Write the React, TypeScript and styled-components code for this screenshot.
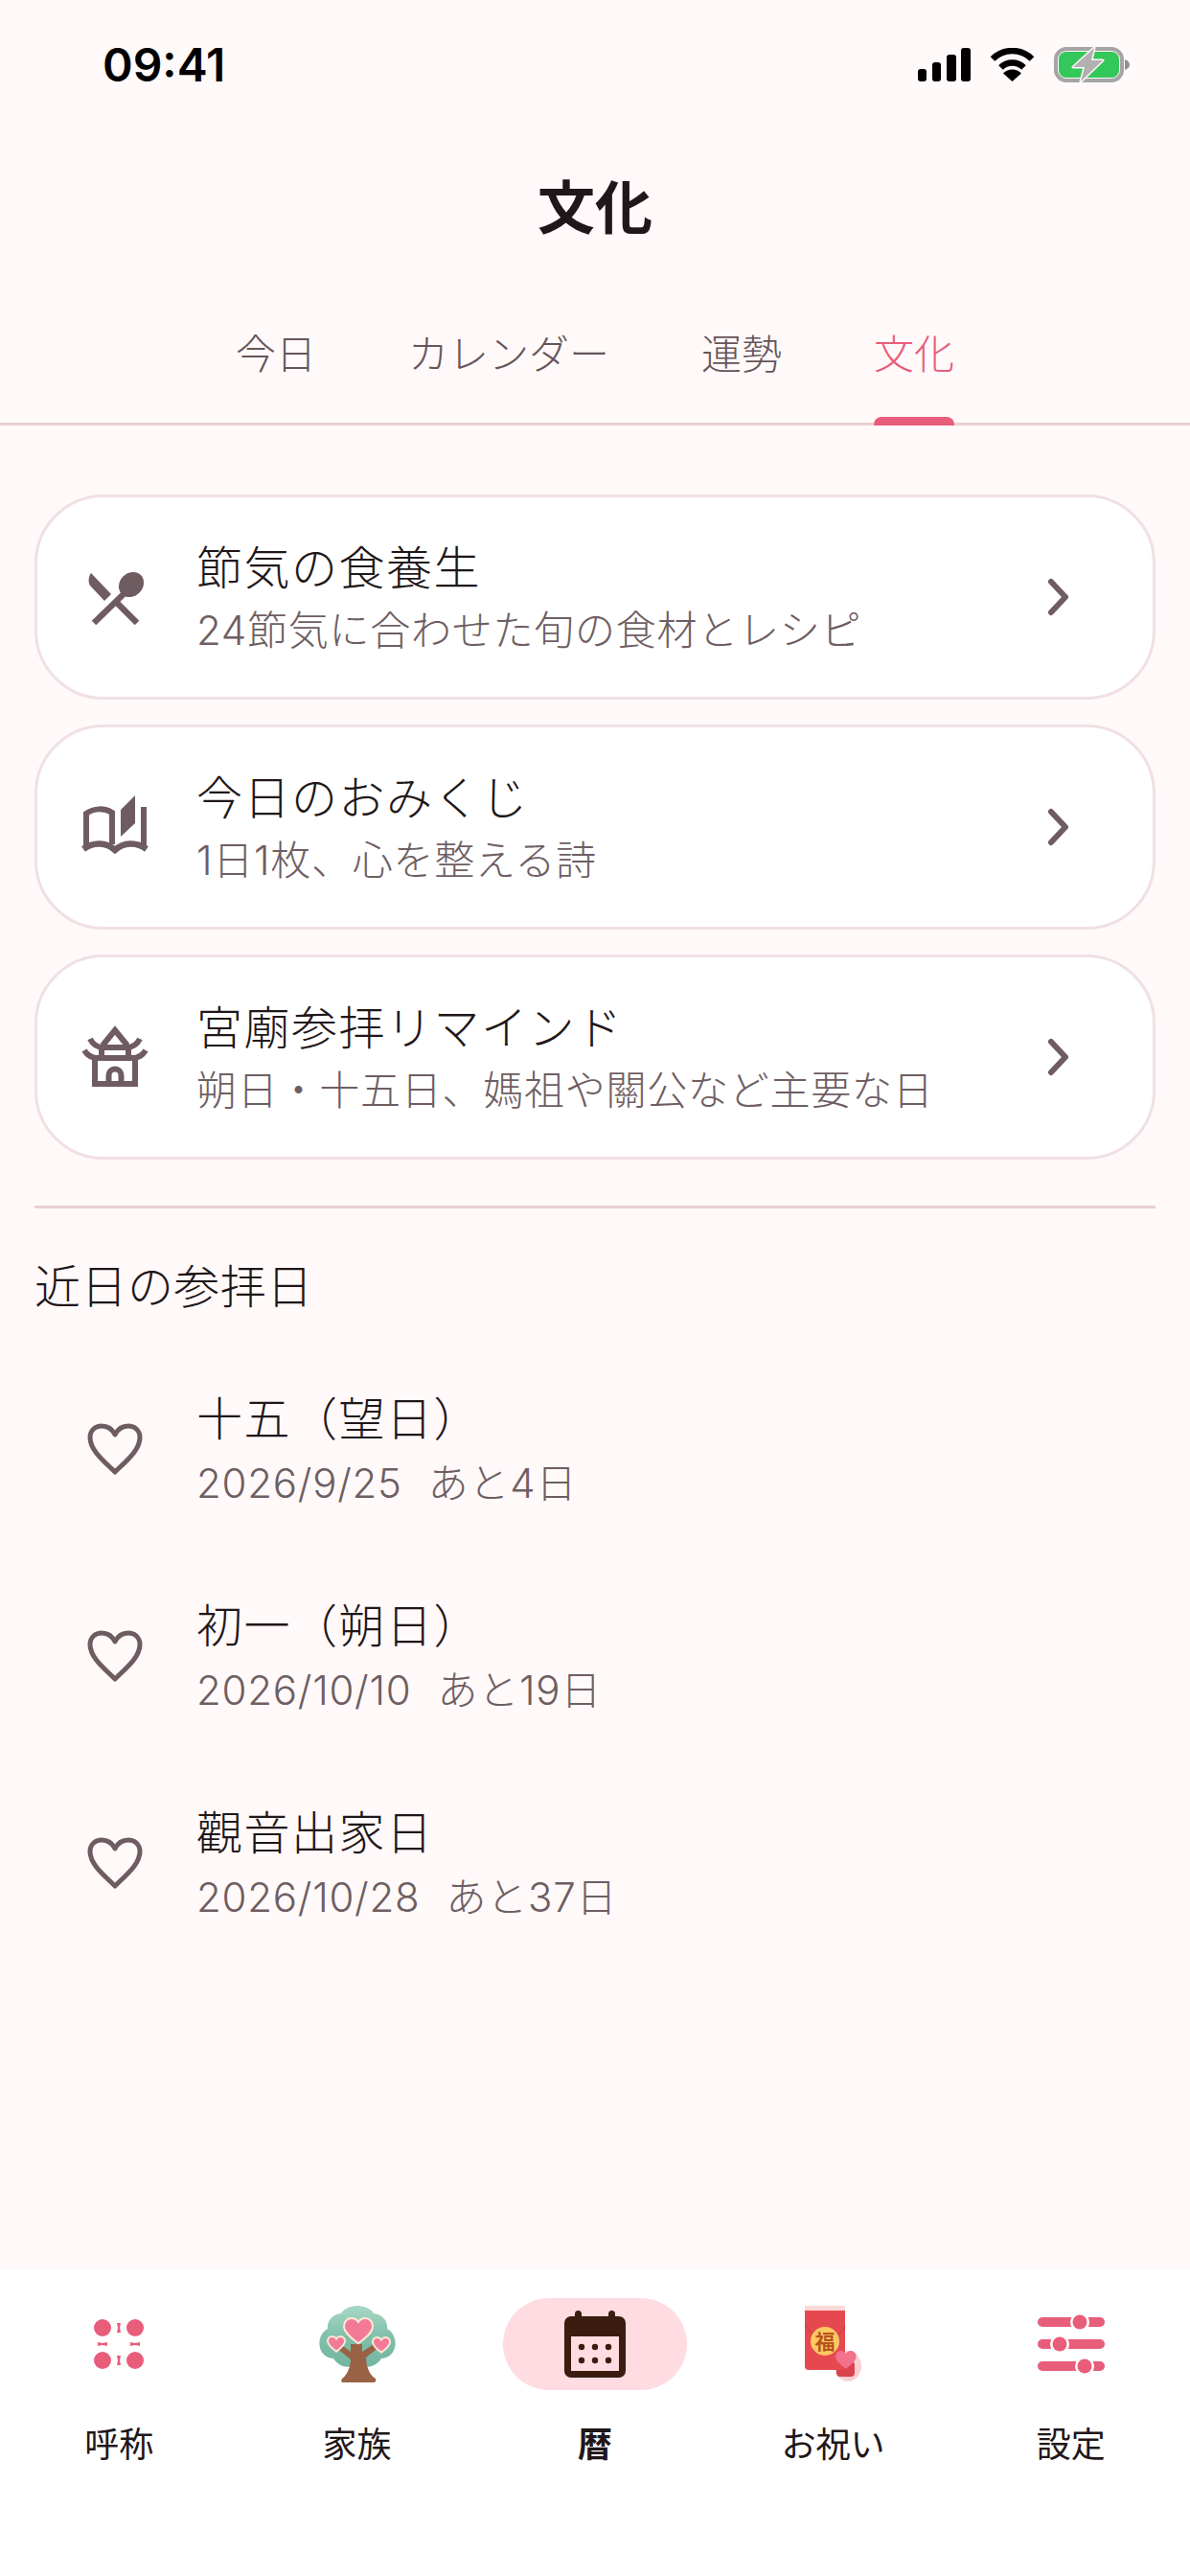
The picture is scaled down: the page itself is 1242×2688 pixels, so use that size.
import React from "react";
import styled, { createGlobalStyle } from "styled-components";

const INK = "#1f1719";
const MUTED = "#6e5e62";
const ICON = "#6f5c61";
const ROSE = "#e85d7a";
const LINE = "#e9cfd5";
const PAPER = "#fff9f9";

const GlobalStyle = createGlobalStyle`
  html, body {
    margin: 0;
    padding: 0;
    background: ${PAPER};
  }
  body {
    font-family: Inter, "Noto Sans CJK JP", sans-serif;
  }
  * {
    box-sizing: border-box;
  }
`;

const Page = styled.div`
  width: 1242px;
  height: 2688px;
  display: flex;
  flex-direction: column;
  background: ${PAPER};
  overflow: hidden;
`;

const StatusBar = styled.div`
  height: 134px;
  display: flex;
  align-items: center;
  justify-content: space-between;
  padding: 0 63px 0 107px;
`;

const Clock = styled.span`
  font-family: Inter, "Liberation Sans", sans-serif;
  font-size: 48px;
  font-weight: 600;
  color: #000;
`;

const StatusIcons = styled.div`
  display: flex;
  align-items: center;
  gap: 20px;
`;

const Title = styled.h1`
  margin: 0;
  height: 166px;
  padding-bottom: 10px;
  display: flex;
  align-items: center;
  justify-content: center;
  font-size: 60px;
  font-weight: 700;
  color: ${INK};
`;

const TabBar = styled.div`
  height: 144px;
  display: flex;
  justify-content: center;
  gap: 96px;
  border-bottom: 3px solid ${LINE};
`;

const Tab = styled.div<{ $active?: boolean }>`
  position: relative;
  padding-top: 40px;
  font-size: 42px;
  font-weight: 300;
  line-height: 60px;
  color: ${({ $active }) => ($active ? ROSE : "#665559")};

  ${({ $active }) =>
    $active &&
    `
    &::after {
      content: "";
      position: absolute;
      left: 0;
      right: 0;
      bottom: -3px;
      height: 9px;
      background: ${ROSE};
      border-radius: 8px 8px 0 0;
    }
  `}
`;

const Content = styled.main`
  padding: 72px 36px 0;
  display: flex;
  flex-direction: column;
`;

const Cards = styled.div`
  display: flex;
  flex-direction: column;
  gap: 26px;
`;

const Card = styled.div`
  height: 214px;
  display: flex;
  align-items: center;
  gap: 45px;
  padding: 0 86px 0 41px;
  background: #fff;
  border: 3px solid #f0e0e4;
  border-radius: 72px;
`;

const IconSlot = styled.div`
  width: 80px;
  height: 80px;
  flex: none;
`;

const Texts = styled.div<{ $gap: number }>`
  flex: 1;
  display: flex;
  flex-direction: column;
  gap: ${({ $gap }) => $gap}px;
`;

const ItemTitle = styled.div`
  font-size: 48px;
  font-weight: 300;
  line-height: 66px;
  letter-spacing: 1.5px;
  color: ${INK};
`;

const ItemSub = styled.div`
  display: flex;
  gap: 27px;
  font-size: 42px;
  font-weight: 300;
  line-height: 58px;
  letter-spacing: 0.75px;
  color: ${MUTED};
`;

const Divider = styled.div`
  height: 3px;
  margin-top: 48px;
  background: ${LINE};
`;

const SectionTitle = styled.h2`
  margin: 52px 0 31px;
  font-size: 48px;
  font-weight: 300;
  line-height: 60px;
  letter-spacing: 0.45px;
  color: ${INK};
`;

const Row = styled.div`
  height: 216px;
  display: flex;
  align-items: center;
  gap: 45px;
  padding-left: 44px;
`;

const BottomNav = styled.nav`
  margin-top: auto;
  height: 319px;
  padding-top: 29px;
  display: grid;
  grid-template-columns: repeat(5, 1fr);
  align-items: start;
  background: #fff;
`;

const NavItem = styled.div`
  display: flex;
  flex-direction: column;
  align-items: center;
  gap: 35px;
`;

const NavIcon = styled.div<{ $active?: boolean }>`
  width: 192px;
  height: 96px;
  display: flex;
  align-items: center;
  justify-content: center;
  border-radius: 48px;
  background: ${({ $active }) => ($active ? "#ffdce2" : "transparent")};
`;

const NavLabel = styled.span<{ $active?: boolean }>`
  font-size: 36px;
  line-height: 44px;
  font-weight: ${({ $active }) => ($active ? 700 : 400)};
  color: ${INK};
`;

const Chevron = () => (
  <svg width="24" height="40" viewBox="0 0 24 40" fill="none" style={{ flex: "none" }}>
    <path d="M4 4 L19 20 L4 36" stroke={ICON} strokeWidth="6" strokeLinecap="round" strokeLinejoin="round" />
  </svg>
);

const CutleryIcon = () => (
  <svg width="80" height="80" viewBox="0 0 80 80" fill={ICON}>
    <ellipse cx="57" cy="27" rx="14" ry="12" transform="rotate(-45 57 27)" />
    <path d="M53 33 L18 67" stroke={ICON} strokeWidth="6.5" fill="none" />
    <path d="M40 44 L63 67" stroke={ICON} strokeWidth="6.5" fill="none" />
    <path d="M15 15 C12 19 12 25 14 28 L29 44 L36 37 Z" />
  </svg>
);

const BookIcon = () => (
  <svg width="80" height="80" viewBox="0 0 80 80" fill="none" stroke={ICON} strokeWidth="6">
    <path d="M10 60 V26 C18 20 29 20 37 25 V58" />
    <path d="M70 19 V60" />
    <path d="M7 63 C18 55 31 56 40 64 C49 56 62 55 73 63" strokeWidth="6.5" />
    <path d="M46 22 L61 7 V36 L46 50 Z" fill={ICON} stroke="none" />
  </svg>
);

const TempleIcon = () => (
  <svg width="80" height="80" viewBox="0 0 80 80" fill="none" stroke={ICON} strokeWidth="6">
    <path d="M27 28 L40 12 L53 28" strokeLinejoin="miter" />
    <path d="M14 21 C17 27 22 30 28 30 H52 C58 30 63 27 66 21" />
    <path d="M26 30 V42 M54 30 V42" />
    <path d="M8 33 C11 38 16 41 22 41 H58 C64 41 69 38 72 33" />
    <path d="M19 41 V68 H61 V41" />
    <path d="M33.5 68 V59 A6.5 6.5 0 0 1 46.5 59 V68" />
  </svg>
);

const HeartIcon = () => (
  <svg width="80" height="80" viewBox="0 0 80 80" fill="none">
    <path
      d="M40 64 C30 54 14 42 14 28 C14 20 20 16 26 16 C32 16 37 19 40 25 C43 19 48 16 54 16 C60 16 66 20 66 28 C66 42 50 54 40 64 Z"
      stroke={ICON}
      strokeWidth="5"
      strokeLinejoin="round"
    />
  </svg>
);

const SignalIcon = () => (
  <svg width="55" height="35" viewBox="0 0 55 35" fill="#000">
    <rect x="0" y="22" width="9" height="13" rx="3" />
    <rect x="15" y="15" width="9" height="20" rx="3" />
    <rect x="30" y="7" width="10" height="28" rx="3" />
    <rect x="45" y="0" width="10" height="35" rx="3" />
  </svg>
);

const WifiIcon = () => (
  <svg width="47" height="35" viewBox="0 0 47 35" fill="none" stroke="#000">
    <path d="M3 11.5 A29 29 0 0 1 44 11.5" strokeWidth="6.5" />
    <path d="M11.5 20.5 A17 17 0 0 1 35.5 20.5" strokeWidth="6.5" />
    <path d="M23.5 35 L14 26.5 A13.5 13.5 0 0 1 33 26.5 Z" fill="#000" stroke="none" />
  </svg>
);

const BatteryIcon = () => (
  <svg width="79" height="37" viewBox="0 0 79 37" fill="none">
    <rect x="2" y="2" width="69" height="33" rx="11" stroke="#a5a5a5" strokeWidth="4" />
    <rect x="5" y="5" width="63" height="27" rx="8" fill="#34c759" />
    <path d="M74 13 C77 14 79 16 79 18.5 C79 21 77 23 74 24 Z" fill="#8f8f8f" />
    <path
      d="M42 1 L20 21 H32 L28 36 L51 14 H39 Z"
      fill="#b2b0b0"
      stroke={PAPER}
      strokeWidth="3"
      strokeLinejoin="round"
      paintOrder="stroke"
    />
  </svg>
);

const LinksIcon = () => (
  <svg width="80" height="80" viewBox="0 0 80 80" fill={ROSE}>
    <circle cx="23" cy="23" r="9" />
    <circle cx="57" cy="23" r="9" />
    <circle cx="23" cy="57" r="9" />
    <circle cx="57" cy="57" r="9" />
    <path d="M38 18 H42 L41 23 L42 28 H38 L39 23 Z" />
    <path d="M38 52 H42 L41 57 L42 62 H38 L39 57 Z" />
    <path d="M18 38 L23 39 L28 38 V42 L23 41 L18 42 Z" />
    <path d="M52 38 L57 39 L62 38 V42 L57 41 L52 42 Z" />
  </svg>
);

const HEART_PATH =
  "M12 21 C4 15 0 11 0 6.5 C0 2.5 3 0 6.3 0 C8.6 0 10.8 1.2 12 3.2 C13.2 1.2 15.4 0 17.7 0 C21 0 24 2.5 24 6.5 C24 11 20 15 12 21 Z";

const TreeHeart = ({ x, y, scale }: { x: number; y: number; scale: number }) => (
  <path
    d={HEART_PATH}
    transform={`translate(${x} ${y}) scale(${scale})`}
    fill="#f27a97"
    stroke="#fde8d6"
    strokeWidth={2 / scale}
  />
);

const TreeIcon = () => (
  <svg width="80" height="80" viewBox="0 0 80 80">
    <defs>
      <linearGradient id="canopy" x1="0" y1="0" x2="0" y2="1">
        <stop offset="0" stopColor="#a8d8c6" />
        <stop offset="0.5" stopColor="#80c0aa" />
        <stop offset="1" stopColor="#74b59f" />
      </linearGradient>
    </defs>
    <path
      d="M40 0 C48 0 55 4 57 8 C66 9 72 16 71 24 C78 28 81 36 79 44 C77 51 71 55 65 55 C60 63 50 66 44 62 H36 C30 66 20 63 15 55 C9 55 3 51 1 44 C-1 36 2 28 9 24 C8 16 14 9 23 8 C25 4 32 0 40 0 Z"
      fill="url(#canopy)"
    />
    <path
      d="M33 40 L37 40 H45 V48 L60 38 L64 42 L49 54 C49 62 52 72 59 76 Q60 80 57 80 H25 Q22 80 24 76 C30 72 33 62 33 56 L18 44 L21 39 L33 48 Z"
      fill="#9a6244"
    />
    <TreeHeart x={26} y={13} scale={1.25} />
    <TreeHeart x={9} y={32} scale={0.75} />
    <TreeHeart x={56} y={33} scale={0.75} />
  </svg>
);

const EnvelopeIcon = () => (
  <svg width="80" height="80" viewBox="0 0 80 80">
    <ellipse cx="56" cy="63" rx="14" ry="16" fill="#fbd0d5" />
    <rect x="44" y="58" width="19" height="16" rx="4" fill="#d9444c" />
    <path d="M11 0 H53 V63 Q53 67 49 67 H15 Q11 67 11 63 Z" fill="#e5494f" />
    <rect x="11" y="0" width="42" height="5" fill="#fbd9d9" />
    <path d="M11 20 C18 30 26 36 32 38 C40 36 48 30 53 22" fill="none" stroke="#bd3a3f" strokeWidth="1" />
    <circle cx="32" cy="37" r="15" fill="#fcc860" />
    <text
      x="32"
      y="44.5"
      textAnchor="middle"
      fontSize="21"
      fontWeight="700"
      fontFamily='"Noto Sans CJK JP", sans-serif'
      fill="#b9531c"
    >
      福
    </text>
    <path d={HEART_PATH} transform="translate(43 47) scale(0.9)" fill="#f2718c" />
  </svg>
);

const CalendarIcon = () => (
  <svg width="64" height="70" viewBox="0 0 64 70">
    <rect x="11" y="0" width="7" height="14" rx="3.5" fill="#3a1d0e" />
    <rect x="46" y="0" width="7" height="14" rx="3.5" fill="#3a1d0e" />
    <rect x="0" y="6" width="64" height="64" rx="7" fill="#3a1d0e" />
    <rect x="7" y="27" width="50" height="36" fill="#ffdce2" />
    {[18, 32, 46].map((cx) =>
      [38, 52].map((cy) => <circle key={`${cx}-${cy}`} cx={cx} cy={cy} r="3.2" fill="#3a1d0e" />)
    )}
  </svg>
);

const SliderLine = ({ y, knob }: { y: number; knob: number }) => (
  <>
    <rect x="0" y={y - 5} width="70" height="10" rx="5" fill={ROSE} />
    <circle cx={knob} cy={y} r="10" fill="#fff" />
    <circle cx={knob} cy={y} r="7.5" fill={ROSE} />
  </>
);

const SlidersIcon = () => (
  <svg width="70" height="66" viewBox="0 0 70 66">
    <SliderLine y={10} knob={44} />
    <SliderLine y={33} knob={23} />
    <SliderLine y={56} knob={49} />
  </svg>
);

const menuItems = [
  { title: "節気の食養生", sub: "24節気に合わせた旬の食材とレシピ", icon: <CutleryIcon /> },
  { title: "今日のおみくじ", sub: "1日1枚、心を整える詩", icon: <BookIcon /> },
  { title: "宮廟参拝リマインド", sub: "朔日・十五日、媽祖や關公など主要な日", icon: <TempleIcon /> },
];

const upcomingDays = [
  { title: "十五（望日）", date: "2026/9/25", left: "あと4日" },
  { title: "初一（朔日）", date: "2026/10/10", left: "あと19日" },
  { title: "觀音出家日", date: "2026/10/28", left: "あと37日" },
];

const tabs = ["今日", "カレンダー", "運勢", "文化"];

const navItems = [
  { label: "呼称", icon: <LinksIcon /> },
  { label: "家族", icon: <TreeIcon /> },
  { label: "暦", icon: <CalendarIcon />, active: true },
  { label: "お祝い", icon: <EnvelopeIcon /> },
  { label: "設定", icon: <SlidersIcon /> },
];

export default function App() {
  return (
    <Page>
      <GlobalStyle />
      <StatusBar>
        <Clock>09:41</Clock>
        <StatusIcons>
          <SignalIcon />
          <WifiIcon />
          <BatteryIcon />
        </StatusIcons>
      </StatusBar>
      <Title>文化</Title>
      <TabBar>
        {tabs.map((tab) => (
          <Tab key={tab} $active={tab === "文化"}>
            {tab}
          </Tab>
        ))}
      </TabBar>
      <Content>
        <Cards>
          {menuItems.map((item) => (
            <Card key={item.title}>
              <IconSlot>{item.icon}</IconSlot>
              <Texts $gap={3}>
                <ItemTitle>{item.title}</ItemTitle>
                <ItemSub>{item.sub}</ItemSub>
              </Texts>
              <Chevron />
            </Card>
          ))}
        </Cards>
        <Divider />
        <SectionTitle>近日の参拝日</SectionTitle>
        {upcomingDays.map((day) => (
          <Row key={day.title}>
            <IconSlot>
              <HeartIcon />
            </IconSlot>
            <Texts $gap={5}>
              <ItemTitle>{day.title}</ItemTitle>
              <ItemSub>
                <span>{day.date}</span>
                <span>{day.left}</span>
              </ItemSub>
            </Texts>
          </Row>
        ))}
      </Content>
      <BottomNav>
        {navItems.map((item) => (
          <NavItem key={item.label}>
            <NavIcon $active={item.active}>{item.icon}</NavIcon>
            <NavLabel $active={item.active}>{item.label}</NavLabel>
          </NavItem>
        ))}
      </BottomNav>
    </Page>
  );
}
